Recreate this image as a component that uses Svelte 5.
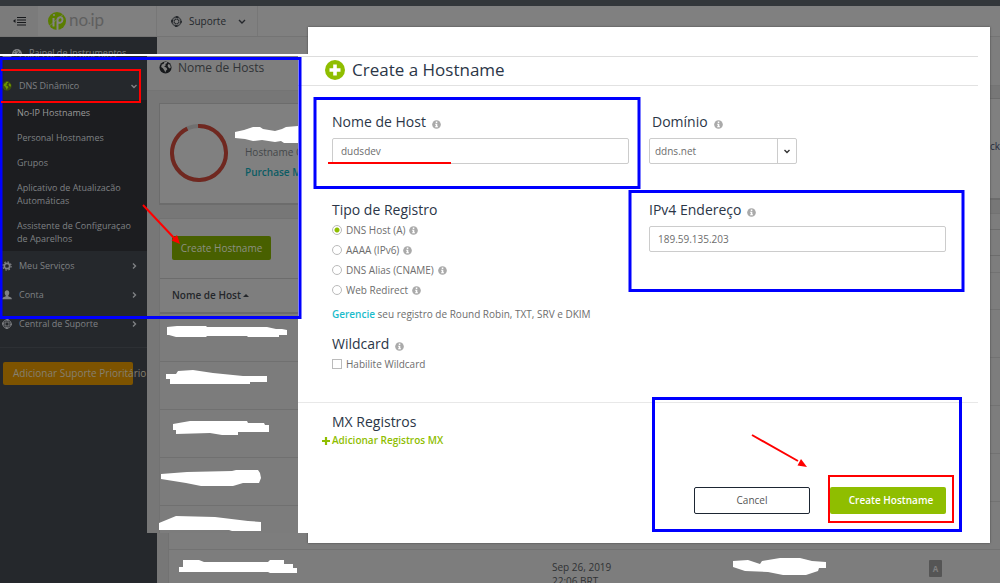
<script>
  const submenu = [
    'No-IP Hostnames',
    'Personal Hostnames',
    'Grupos',
    'Aplicativo de Atualizacão Automáticas',
    'Assistente de Configuraçao de Aparelhos'
  ];
  const menu = [
    { label: 'Meu Serviços', icon: 'gear' },
    { label: 'Conta', icon: 'user' },
    { label: 'Central de Suporte', icon: 'ring' }
  ];
  const records = [
    { id: 'a', label: 'DNS Host (A)' },
    { id: 'aaaa', label: 'AAAA (IPv6)' },
    { id: 'cname', label: 'DNS Alias (CNAME)' },
    { id: 'web', label: 'Web Redirect' }
  ];
  let hostname = $state('dudsdev');
  let address = $state('189.59.135.203');
  let domain = $state('ddns.net');
  let record = $state('a');
  let wildcard = $state(false);
</script>

{#snippet info()}
  <svg class="info" viewBox="0 0 10 10" aria-hidden="true">
    <circle cx="5" cy="5" r="4.8" />
    <path d="M4.2 1.8h1.7v1.5H4.2zM3.5 4.100h2.400v2.800h.7v1.100H3.500V6.900h.7V5.200h-.7z" fill="#fff" />
  </svg>
{/snippet}

{#snippet globe(color, land)}
  <svg class="icon" viewBox="0 0 14 14" aria-hidden="true">
    <circle cx="7" cy="7" r="6.500" fill={color} />
    <path d="M6 1.200 9 1l-.4 1.500-1.800.8.6 1.200L5.500 6l2.600 1.300.9 1.500-1.500 1.700-.6 2-1.200-2.500-1.500-2.200L2.300 6.500 3 3.800l1.800-.6zM10.500 3l1.600 1.500.6 2.500-1.200 1-1.800-1.500-.4-1.800z" fill={land} />
  </svg>
{/snippet}

{#snippet ring()}
  <svg class="icon ring" viewBox="0 0 14 14" fill="none" stroke="currentColor" aria-hidden="true">
    <circle cx="7" cy="7" r="5.900" stroke-width="1.200" />
    <circle cx="7" cy="7" r="2.900" stroke-width="1.100" />
    <circle cx="7" cy="7" r="5.700" stroke-width="2.400" stroke-dasharray="3 5.954" stroke-dashoffset="1.500" />
    <path d="M5.200 1.500v3M8.800 1.500v3M5.200 9.500v3M8.800 9.500v3M1.500 5.200h3M1.500 8.800h3M9.500 5.200h3M9.500 8.800h3" stroke-width=".8" />
  </svg>
{/snippet}

{#snippet gauge()}
  <svg class="icon" viewBox="0 0 14 14" aria-hidden="true">
    <path d="M0 8.500a7 7 0 0 1 14 0c0 1.500-.5 2.800-1.200 4H1.200C.5 11.300 0 10 0 8.500z" fill="currentColor" />
    <path d="M2 8h1.800M10.200 8H12M3.400 4.400l1.200 1.200M7 3v1.800M9.300 5 7 10" stroke="#25282c" stroke-width="1.300" />
  </svg>
{/snippet}

{#snippet chevron(d)}
  <svg class="chev" viewBox="0 0 8 8" fill="none" stroke="currentColor" stroke-width="1.400" aria-hidden="true"><path {d} /></svg>
{/snippet}

<div class="page">
  <div class="strip"></div>
  <header>
    <button class="toggle" aria-label="Menu">
      <svg viewBox="0 0 14 10" aria-hidden="true">
        <path d="M2.500 3v4L0 5z" fill="#17191c" />
        <path d="M4 1.500h9M4 4h9M4 6.500h9M4 9h9" stroke="#17191c" stroke-width="1.200" />
      </svg>
    </button>
    <a class="logo" href="#home">
      <svg viewBox="0 0 18 18" aria-hidden="true">
        <circle cx="9" cy="9" r="9" fill="#5a7d00" />
        <path d="M5.500 6v8.500M9.500 18V8.500c0-4 5-4.500 5-1s-3.500 4-4.700 2.500" fill="none" stroke="#848484" stroke-width="2" />
        <path d="M5 3h2" stroke="#848484" stroke-width="1.600" />
        <path d="M0 15 18 0" stroke="#808080" stroke-width=".7" />
      </svg>
      <span>no<small>·</small>ip</span>
    </a>
    <button class="support">
      {@render ring()}
      <span>Suporte</span>
      {@render chevron('M1 3 4 6 7 3')}
    </button>
  </header>

  <div class="body">
    <nav class="rail" aria-label="Principal">
      <a href="#painel">{@render gauge()}<span>Painel de Instrumentos</span></a>
    </nav>
    <main>
      <div class="titlebar"></div>
      <section class="card side">ck</section>
      <section class="sheet">
        <div class="bar"></div>
        <div class="tools"></div>
        <div class="head"></div>
        <div class="row first"></div>
        <div class="row"></div>
        <div class="row"></div>
        <div class="row"></div>
        <div class="row"></div>
        <div class="row"></div>
        <div class="row last">
          <span></span>
          <time>Sep 26, 2019<br />22:06 BRT</time>
          <b>A</b>
        </div>
      </section>
    </main>
  </div>

  <div class="backing"></div>

  <div class="capture">
    <nav class="menu" aria-label="Menu lateral">
      <a class="cut" href="#painel">{@render gauge()}<span>Painel de Instrumentos</span></a>
      <a class="item" href="#dns">
        {@render globe('#3c4a12', '#6c9400')}<span>DNS Dinâmico</span>{@render chevron('M1.500 3 4 5.500 6.500 3')}
      </a>
      <ul>
        {#each submenu as entry, i}
          <li class:active={i === 0}><a href="#sub">{entry}</a></li>
        {/each}
      </ul>
      {#each menu as entry}
        <a class="item" href="#menu">
          {#if entry.icon === 'gear'}
            <svg class="icon" viewBox="0 0 14 14" fill="none" stroke="currentColor" aria-hidden="true">
              <circle cx="7" cy="7" r="3.800" stroke-width="2.400" />
              <circle cx="7" cy="7" r="5.800" stroke-width="1.600" stroke-dasharray="2.300 2.255" />
            </svg>
          {:else if entry.icon === 'user'}
            <svg class="icon" viewBox="0 0 14 14" fill="currentColor" aria-hidden="true">
              <path d="M7 .5c2 0 3.200 1.500 3.200 3.500 0 1.500-.6 2.900-1.500 3.700v1.200l4 1.600c.8.4 1.100 1.200 1.100 2.500H.2c0-1.300.3-2.100 1.100-2.500l4-1.600V7.700C4.400 6.900 3.800 5.500 3.800 4 3.800 2 5 .5 7 .5z" />
            </svg>
          {:else}
            {@render ring()}
          {/if}
          <span>{entry.label}</span>
          {@render chevron('M3 1.500 5.500 4 3 6.500')}
        </a>
      {/each}
      <div class="promo"><button>Adicionar Suporte Prioritário</button></div>
    </nav>

    <div class="hosts">
      <h2>{@render globe('#17191c', '#808080')}<span>Nome de Hosts</span></h2>
      <section class="card quota">
        <svg class="dial" viewBox="0 0 58 58" fill="none" stroke-width="4" aria-hidden="true">
          <circle cx="29" cy="29" r="27" stroke="#707070" />
          <circle cx="29" cy="29" r="27" stroke="#702820" stroke-dasharray="158 12" transform="rotate(-92 29 29)" />
        </svg>
        <div>
          <p>Hostname C</p>
          <a href="#more">Purchase M</a>
        </div>
      </section>
      <section class="list">
        <div class="action"><button>Create Hostname</button></div>
        <div class="sort">Nome de Host<i></i></div>
        <div class="row"></div>
        <div class="row"></div>
        <div class="row"></div>
        <div class="row"></div>
        <div class="row"></div>
      </section>
    </div>

    <form class="dialog" onsubmit={(e) => e.preventDefault()}>
      <h1>
        <svg viewBox="0 0 20 20" aria-hidden="true">
          <circle cx="10" cy="10" r="10" fill="#8fbe00" />
          <path d="M10 4.500v11M4.500 10h11" stroke="#fff" stroke-width="3.600" />
        </svg>
        Create a Hostname
      </h1>
      <div class="fields">
        <div class="field">
          <label class="title" for="host">Nome de Host {@render info()}</label>
          <input id="host" type="text" bind:value={hostname} />
        </div>
        <div class="field">
          <label class="title domain" for="domain">Domínio {@render info()}</label>
          <div class="select">
            <select id="domain" bind:value={domain}><option>ddns.net</option></select>
            <span>{@render chevron('M1.500 3 4 5.500 6.500 3')}</span>
          </div>
        </div>
        <div class="field">
          <fieldset>
            <legend class="title">Tipo de Registro</legend>
            {#each records as r}
              <label class="choice" for={r.id}>
                <input id={r.id} type="radio" name="record" value={r.id} bind:group={record} />
                {r.label}{@render info()}
              </label>
            {/each}
          </fieldset>
          <p class="note"><a href="#manage">Gerencie</a> seu registro de Round Robin, TXT, SRV e DKIM</p>
          <h3 class="title">Wildcard {@render info()}</h3>
          <label class="choice" for="wild">
            <input id="wild" type="checkbox" bind:checked={wildcard} />Habilite Wildcard
          </label>
        </div>
        <div class="field">
          <label class="title" for="ip">IPv4 Endereço {@render info()}</label>
          <input id="ip" type="text" bind:value={address} />
        </div>
      </div>
      <div class="mx">
        <h3 class="title">MX Registros</h3>
        <a href="#mx">
          <svg viewBox="0 0 8 8" aria-hidden="true"><path d="M4 0v8M0 4h8" stroke="currentColor" stroke-width="2.200" /></svg>
          Adicionar Registros MX
        </a>
      </div>
      <div class="buttons">
        <button type="button" class="cancel">Cancel</button>
        <button type="submit" class="create">Create Hostname</button>
      </div>
    </form>
  </div>

  <svg class="marks" width="1000" height="583" viewBox="0 0 1000 583" aria-hidden="true">
    <g fill="#fff">
      <path d="M235 132 244 130 253 127 260 127 263 129 275 131 282 129 286 127 298 126V143L284 143 281 141 275 142 262 140 253 141 245 139 235 138z" />
      <path d="M167 327 177 326H206L207 327H267L276 329H282L287 330V335H279V337H248L247 336H207L206 337H176L169 335H167z" />
      <path d="M166 374H176L178 371 193 370 213 373 243 376 258 376H267V382H250V384H170V379H166z" />
      <path d="M173 424 190 421H247L248 423H264L265 425H269V432H238V435H222L210 433 176 434V430H173z" />
      <path d="M161 474 187 472 232 471 236 470H258L260 473 261 478 259 483 243 483 233 486H201L186 483 161 479z" />
      <path d="M159 523 176 516 215 517 248 521 261 522V531H232L229 530H159z" />
      <path d="M179 567H183V560H199L204 562H268L270 560H284V564H293V568H297V573H270L268 572H179z" />
      <path d="M733 561 748 560 760 564 762 561 780 558H800L812 561 826 562V568H819L818 571 806 575H783L768 572 745 571 733 567z" />
    </g>
    <g fill="none" stroke="#00f" stroke-width="3">
      <path d="M0 58.500h300v259H0M1 58v260" />
      <rect x="315" y="98.500" width="324" height="89" />
      <rect x="630" y="191.500" width="333" height="99" />
      <rect x="653.500" y="398.500" width="307" height="132" />
    </g>
    <g fill="none" stroke="#f00" stroke-width="2">
      <path d="M1 70h139v32H1" />
      <path d="M328 163h123" />
      <rect x="829" y="476" width="124" height="46" />
      <path d="M143 205l32 34M752 435l46 26" />
    </g>
    <path fill="#f00" d="M180 244l-8.500-3.500 5.500-5.500zM807 467l-9.500-1.500 3.500-6.500z" />
  </svg>
</div>

<style>
  :global(body) { margin: 0; background: #7b7b7b; }
  * { box-sizing: border-box; }
  .page { position: relative; display: flex; flex-direction: column; height: 100vh; min-height: 583px; overflow: hidden; font: 10px/13px "Open Sans", sans-serif; color: #6d6d6d; }
  a { color: inherit; text-decoration: none; }
  button, input, select { font: inherit; color: inherit; }
  button { border: 0; padding: 0; background: none; }
  h1, h2, h3, p, ul, fieldset { margin: 0; padding: 0; border: 0; font-weight: 400; }
  svg { flex: none; }
  .icon { width: 10px; height: 10px; }
  .chev { width: 8px; height: 8px; }

  .strip { height: 6px; background: #33373b; }
  header { display: flex; height: 31px; background: #808080; border-bottom: 1px solid #747474; }
  .toggle { width: 38px; background: #7b7b7b; }
  .toggle svg { width: 14px; height: 10px; display: block; margin-left: 13px; }
  .logo { display: flex; align-items: center; gap: 3px; width: 119px; padding-left: 10px; border-right: 1px solid #777; color: #5f5f5f; font: 17px/20px Lato, sans-serif; }
  .logo svg { width: 18px; height: 18px; }
  .logo small { font-size: 8px; font-weight: 900; }
  .support { display: flex; align-items: center; width: 101px; padding-left: 14px; border-right: 1px solid #777; color: #24272b; }
  .support span { margin: 0 12px 0 7px; }
  .support .ring { width: 11px; height: 11px; }

  .body { display: flex; flex: 1; min-height: 0; }
  .rail { width: 157px; background: #25282c; color: #7f8184; font-size: 9px; }
  .rail a { display: flex; align-items: center; gap: 7px; padding: 9px 0 0 12px; }
  main { flex: 1; display: flex; flex-direction: column; background: #777; }
  .titlebar { height: 49px; background: #7e7e7e; border-bottom: 1px solid #747474; }
  .card { background: #808080; border: 1px solid #6c6c6c; border-bottom-width: 2px; }
  .side { margin: 12px 0 13px 11px; height: 102px; padding: 41px 0 0; border-right: 0; text-align: right; color: #26293c; }
  .sheet { flex: 1; margin-left: 11px; background: #7d7d7d; border: 1px solid #727272; border-width: 1px 0 0 1px; overflow: hidden; }
  .bar { height: 16px; border-bottom: 1px solid #6c6c6c; }
  .tools { height: 26px; border-bottom: 1px solid #6c6c6c; }
  .head { height: 17px; border-bottom: 1px solid #727272; }
  .sheet .row { height: 48px; border-bottom: 1px solid #727272; }
  .sheet .first { height: 37px; }
  .sheet .last { display: flex; height: 60px; padding: 10px 58px 0 0; border: 0; color: #303234; line-height: 14px; }
  .last span { flex: 1; }
  .last time { width: 377px; }
  .last b { width: 13px; height: 17px; border-radius: 1px; background: #555; color: #808080; font-size: 8px; line-height: 17px; text-align: center; }

  .backing { position: absolute; inset: 27px 10px 40px 308px; background: #fff; box-shadow: 0 0 2px #444; }

  .capture { position: absolute; inset: 54px 22px 50px 0; display: flex; overflow: hidden; background: #fff; border-top: 2px solid #fff; }
  .menu { width: 147px; background: #25282c; color: #7f8184; font-size: 9px; }
  .cut { display: flex; gap: 7px; height: 11px; padding-left: 2px; overflow: hidden; }
  .cut span, .cut svg { margin-top: -8px; }
  .item { display: flex; align-items: center; gap: 7px; height: 29px; padding: 0 9px 0 2px; }
  .item span { flex: 1; }
  .cut + .item { height: 33px; padding-top: 4px; }
  .menu ul { list-style: none; background: #1c1d20; }
  li { padding: 6px 10px 6px 17px; }
  li.active { color: #9a9a9a; }
  .promo { margin-top: 9px; padding: 14px 14px 0 3px; border-top: 1px solid #2d3034; }
  .promo button { width: 100%; height: 23px; padding-left: 10px; border-radius: 2px; background: #7d5300; text-align: left; white-space: nowrap; color: #858070; font-size: 10px; }

  .hosts { width: 151px; background: #777; overflow: hidden; }
  .hosts h2 { display: flex; align-items: center; gap: 6px; height: 35px; padding: 0 0 12px 12px; background: #7e7e7e; border-bottom: 1px solid #747474; color: #303336; font-size: 12px; white-space: nowrap; }
  .hosts h2 svg { width: 13px; height: 13px; }
  .quota { display: flex; gap: 17px; height: 102px; margin: 12px 0 13px 12px; padding: 20px 0 0 10px; border-right: 0; white-space: nowrap; color: #44474a; }
  .dial { width: 58px; height: 58px; }
  .quota p { margin: 22px 0 7px; }
  .quota a { color: #0b5c64; font-weight: 600; }
  .list { margin-left: 12px; background: #7e7e7e; border: 1px solid #727272; border-right: 0; }
  .action { height: 60px; padding: 17px 0 0 12px; border-bottom: 1px solid #6c6c6c; }
  .action button { width: 99px; height: 24px; border-radius: 2px; background: #486000; color: #8c9080; }
  .sort { display: flex; align-items: center; gap: 2px; height: 35px; padding-left: 12px; border-bottom: 2px solid #6c6c6c; color: #24272b; font-weight: 600; }
  .sort i { border: 3px solid transparent; border-bottom-color: #24272b; border-top: 0; }
  .list .row { height: 48px; border-bottom: 1px solid #707070; background: #7c7c7c; }

  .dialog { flex: 1; display: flex; flex-direction: column; box-shadow: inset 0 1px #ddd; min-width: 0; }
  h1 { display: flex; align-items: center; gap: 7px; height: 30px; padding: 0 0 2px 27px; border-bottom: 1px solid #e2e2e2; color: #2b3647; font-size: 17px; line-height: 20px; }
  h1 svg { width: 20px; height: 20px; }
  .fields { display: grid; grid-template-columns: 297px 297px; column-gap: 20px; padding: 26px 0 28px 34px; border-bottom: 1px solid #e8e8e8; }
  .field:nth-child(-n+2) { min-height: 88px; }
  .title { display: flex; align-items: center; gap: 6px; height: 20px; padding: 0; color: #2b3647; font-size: 14px; line-height: 20px; }
  .domain { padding-left: 3px; }
  .info { width: 9px; height: 9px; fill: #aaa; }
  .title .info { margin-top: 4px; }
  input[type='text'] { display: block; width: 100%; height: 26px; margin-top: 6px; padding: 0 8px; border: 1px solid #ccc; border-radius: 2px; background: #fff; outline: 0; }
  .select { display: flex; width: 148px; height: 26px; margin-top: 6px; border: 1px solid #ccc; border-radius: 2px; }
  .select select { flex: 1; appearance: none; border: 0; padding: 0 5px; background: none; }
  .select span { display: grid; place-items: center; width: 19px; border-left: 1px solid #ccc; color: #333; }
  .choice { display: flex; align-items: center; gap: 4px; height: 20px; }
  .choice input { appearance: none; width: 10px; height: 10px; margin: 0; border: 1px solid #bbb; background: #fff; }
  .choice input[type='radio'] { border-radius: 50%; }
  .choice input:checked { background: radial-gradient(circle, #8fbe00 2px, #fff 3px); }
  .note { margin: 8px 0 13px; }
  .note a { color: #1bbccb; font-weight: 600; }
  .mx { padding: 9px 0 0 24px; }
  .mx .title { padding-left: 10px; }
  .mx a { display: inline-flex; align-items: center; gap: 2px; margin-top: 2px; color: #8fbe00; font-weight: 600; }
  .mx a svg { width: 8px; height: 8px; }
  .buttons { display: flex; justify-content: flex-end; gap: 20px; margin-top: auto; padding: 0 32px 19px 0; }
  .buttons button { width: 116px; height: 27px; border-radius: 2px; }
  .cancel { border: 1px solid #1d2633; color: #555; }
  .create { padding-left: 6px; background: #8fbe00; color: #fff; font-weight: 600; }
  .marks { position: absolute; top: 0; left: 0; pointer-events: none; }
</style>
